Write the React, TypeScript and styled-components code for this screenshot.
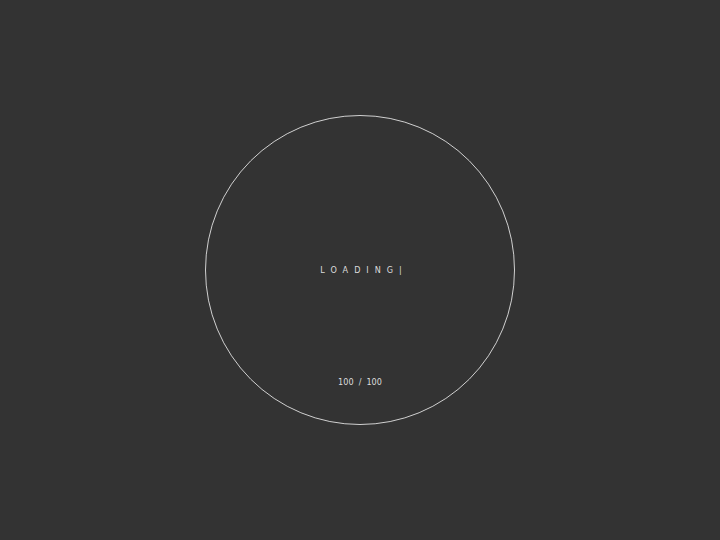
import React from 'react';
import styled, { createGlobalStyle } from 'styled-components';

const GlobalStyle = createGlobalStyle`
    html, body {
        margin: 0;
        padding: 0;
        background: #333333;
    }
`;

const Screen = styled.div`
    width: 720px;
    height: 540px;
    display: flex;
    align-items: center;
    justify-content: center;
    background: #333333;
    font-family: "DejaVu Sans Condensed", "Liberation Sans Narrow", "Liberation Sans", sans-serif;
    color: #dcdcdc;
`;

const Ring = styled.div`
    position: relative;
    width: 308px;
    height: 308px;
    border: 1px solid #d0d0d0;
    border-radius: 50%;
    display: flex;
    align-items: center;
    justify-content: center;
`;

const Label = styled.div`
    font-size: 9px;
    letter-spacing: 6px;
    padding-left: 8px;
    text-transform: uppercase;
`;

const Counter = styled.div`
    position: absolute;
    left: 0;
    right: 0;
    bottom: 37px;
    text-align: center;
    font-size: 9px;
    word-spacing: 2.5px;
`;

const App: React.FC = () => {
    return (
        <>
            <GlobalStyle />
            <Screen>
                <Ring>
                    <Label>Loading|</Label>
                    <Counter>100 / 100</Counter>
                </Ring>
            </Screen>
        </>
    );
};

export default App;
